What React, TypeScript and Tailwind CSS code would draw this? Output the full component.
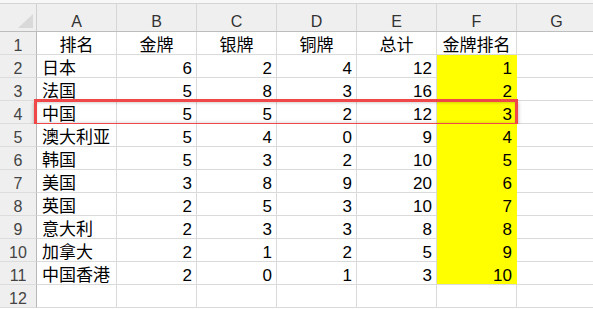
import React from 'react';

type Row = {
  name: string;
  gold: number;
  silver: number;
  bronze: number;
  total: number;
  rank: number;
};

const columns = ['A', 'B', 'C', 'D', 'E', 'F', 'G'];

const headings = ['排名', '金牌', '银牌', '铜牌', '总计', '金牌排名'];

const rows: Row[] = [
  { name: '日本', gold: 6, silver: 2, bronze: 4, total: 12, rank: 1 },
  { name: '法国', gold: 5, silver: 8, bronze: 3, total: 16, rank: 2 },
  { name: '中国', gold: 5, silver: 5, bronze: 2, total: 12, rank: 3 },
  { name: '澳大利亚', gold: 5, silver: 4, bronze: 0, total: 9, rank: 4 },
  { name: '韩国', gold: 5, silver: 3, bronze: 2, total: 10, rank: 5 },
  { name: '美国', gold: 3, silver: 8, bronze: 9, total: 20, rank: 6 },
  { name: '英国', gold: 2, silver: 5, bronze: 3, total: 10, rank: 7 },
  { name: '意大利', gold: 2, silver: 3, bronze: 3, total: 8, rank: 8 },
  { name: '加拿大', gold: 2, silver: 1, bronze: 2, total: 5, rank: 9 },
  { name: '中国香港', gold: 2, silver: 0, bronze: 1, total: 3, rank: 10 },
];

const font = { fontFamily: '"Liberation Sans", "Noto Sans CJK SC", sans-serif' };

const RowHeader: React.FC<{ n: number }> = ({ n }) => (
  <div className="w-[37px] h-[23px] shrink-0 flex items-end justify-center bg-[#efefef] border-r border-r-[#b9b9b9] border-b border-b-[#dcdcdc] text-[16px] leading-[16px] text-[#444]">
    {n}
  </div>
);

const Cell: React.FC<{
  children?: React.ReactNode;
  align?: 'left' | 'right' | 'center';
  fill?: boolean;
  lastFill?: boolean;
}> = ({ children, align = 'right', fill, lastFill }) => {
  const justify =
    align === 'left' ? 'justify-start pl-[5px]' : align === 'center' ? 'justify-center' : 'justify-end pr-[4px]';
  const bg = fill
    ? `bg-[#ffff00] border-r-[#ffff00] ${lastFill ? 'border-b-[#dadada]' : 'border-b-[#ffff00]'}`
    : 'bg-white border-r-[#dadada] border-b-[#dadada]';
  return (
    <div
      className={`w-[80px] h-[23px] shrink-0 flex items-end ${justify} border-r border-b ${bg} text-[17px] leading-[17px] text-black whitespace-nowrap`}
    >
      {children}
    </div>
  );
};

export default function App() {
  return (
    <div className="w-[593px] h-[309px] overflow-hidden bg-white" style={font}>
      {/* strip under the formula bar */}
      <div className="h-[4px] bg-[#f7f7f7] border-b border-[#d4d4d4]" />

      {/* column letters */}
      <div className="flex h-[28px] bg-[#efefef] border-b border-[#bdbdbd]">
        <div className="w-[37px] shrink-0 flex items-end justify-end pr-[3px] pb-[3px] border-r border-[#cfcfcf]">
          <svg width="15" height="14" viewBox="0 0 15 14">
            <polygon points="15,0 15,14 0,14" fill="#d9d9d9" />
          </svg>
        </div>
        {columns.map((c) => (
          <div
            key={c}
            className="w-[80px] shrink-0 flex items-end justify-center border-r border-[#d6d6d6] text-[16px] leading-[16px] text-[#333] pb-[1px]"
          >
            {c}
          </div>
        ))}
      </div>

      {/* row 1: headings */}
      <div className="flex">
        <RowHeader n={1} />
        {headings.map((h) => (
          <Cell key={h} align="center">
            {h}
          </Cell>
        ))}
        <Cell />
      </div>

      {rows.map((r, i) => (
        <div key={r.name} className="flex relative">
          <RowHeader n={i + 2} />
          <Cell align="left">{r.name}</Cell>
          <Cell>{r.gold}</Cell>
          <Cell>{r.silver}</Cell>
          <Cell>{r.bronze}</Cell>
          <Cell>{r.total}</Cell>
          <Cell fill lastFill={i === rows.length - 1}>
            {r.rank}
          </Cell>
          <Cell />
          {r.name === '中国' && (
            <div className="absolute left-[34px] top-[-2px] w-[484px] h-[27px] border-[3px] border-[#f04848] shadow-[0_3px_4px_rgba(0,0,0,0.3),inset_0_2px_3px_-1px_rgba(0,0,0,0.18),inset_0_-2px_3px_-1px_rgba(0,0,0,0.12)] pointer-events-none" />
          )}
        </div>
      ))}

      {/* row 12: empty */}
      <div className="flex">
        <RowHeader n={12} />
        {columns.map((c) => (
          <Cell key={c} />
        ))}
      </div>
    </div>
  );
}
